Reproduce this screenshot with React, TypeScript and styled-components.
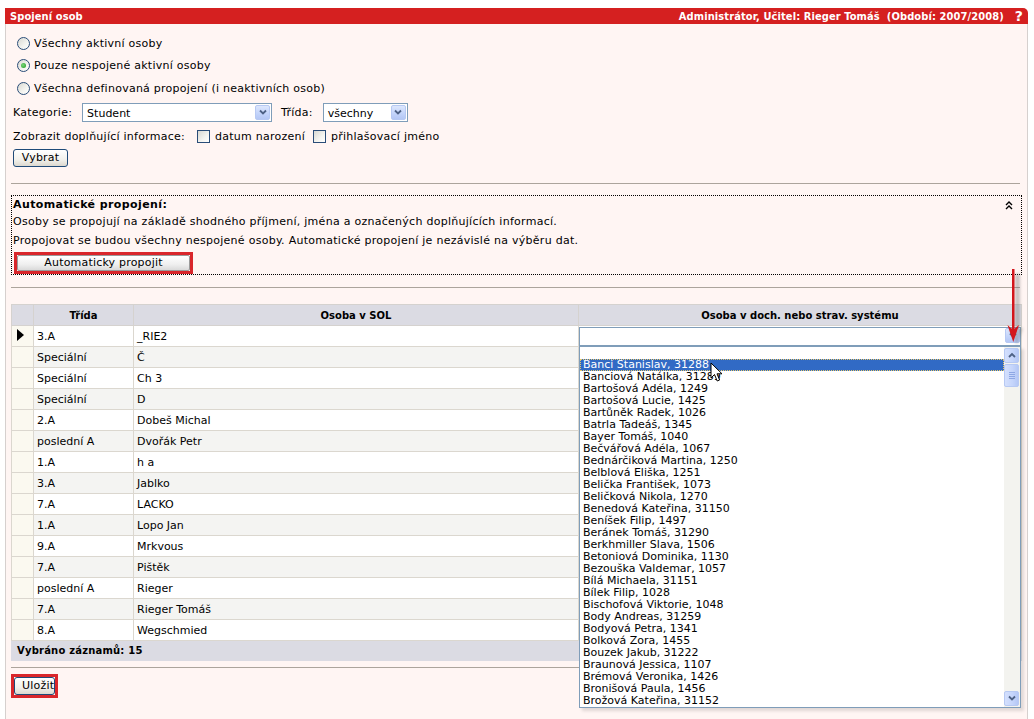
import React from 'react';
import styled, { createGlobalStyle } from 'styled-components';

const GlobalStyle = createGlobalStyle`
  body {
    margin: 0;
    background: #fff;
    font-family: "DejaVu Sans", Verdana, sans-serif;
    font-size: 11px;
    color: #000;
  }
`;

const Page = styled.div`
  position: relative;
  width: 1023px;
  padding: 8px 6px 0 5px;
`;

const TitleBar = styled.div`
  display: flex;
  align-items: center;
  height: 16px;
  padding: 0 5px;
  background: #d52020;
  border-radius: 0 5px 0 0;
  color: #fff;
  font-family: "DejaVu Sans Condensed", "DejaVu Sans", sans-serif;
  font-weight: bold;
  font-size: 11px;
  letter-spacing: 0.1px;
`;

const TitleText = styled.span`
  flex: 1;
`;

const HelpMark = styled.span`
  margin-left: 11px;
  font-family: "DejaVu Sans", sans-serif;
  font-size: 14px;
  line-height: 14px;
`;

const Panel = styled.div`
  min-height: calc(100vh - 24px);
  box-sizing: border-box;
  padding: 8px 5px 0;
  background: #fff5f3;
  border-left: 1px solid #d6d0ce;
  border-right: 1px solid #d6d0ce;
`;

const Form = styled.div`
  padding-left: 2px;
  letter-spacing: 0.25px;
`;

const RadioRow = styled.label<{ $h: number }>`
  display: flex;
  align-items: center;
  gap: 4px;
  height: ${(p) => p.$h}px;
  padding-left: 4px;
`;

const RadioCircle = styled.span<{ $checked?: boolean }>`
  position: relative;
  width: 11px;
  height: 11px;
  border: 1px solid #2a4d78;
  border-radius: 50%;
  background: linear-gradient(135deg, #d8d8d2 0%, #f4f4f0 60%, #fff 100%);
  &::after {
    content: '';
    display: ${(p) => (p.$checked ? 'block' : 'none')};
    position: absolute;
    left: 3px;
    top: 3px;
    width: 5px;
    height: 5px;
    border-radius: 50%;
    background: radial-gradient(circle at 40% 40%, #7bd67b, #1f9a1f);
  }
`;

const FieldRow = styled.div`
  display: flex;
  align-items: center;
  height: 24px;
`;

const FieldLabel = styled.span<{ $gap: number }>`
  margin-right: ${(p) => p.$gap}px;
`;

const Select = styled.div<{ $w: number }>`
  position: relative;
  box-sizing: border-box;
  width: ${(p) => p.$w}px;
  height: 19px;
  border: 1px solid #7f9db9;
  background: #fff;
  padding: 3px 0 0 4px;
  margin-right: 9px;
  letter-spacing: 0;
`;

const ArrowBox = styled.span`
  position: absolute;
  right: 1px;
  top: 1px;
  width: 15px;
  height: 15px;
  box-sizing: border-box;
  border: 1px solid #b7c9f3;
  border-radius: 2px;
  background: linear-gradient(#dde7fd, #c2d3fa 60%, #b4c7f5);
  display: flex;
  align-items: center;
  justify-content: center;
`;

const Chevron = ({ up }: { up?: boolean }) => (
  <svg width="8" height="6" viewBox="0 0 8 6">
    <path
      d={up ? 'M1 5 L4 2 L7 5' : 'M1 1.5 L4 4.5 L7 1.5'}
      fill="none"
      stroke="#4d6185"
      strokeWidth="1.8"
    />
  </svg>
);

const CheckLabel = styled.label<{ $gap: number }>`
  display: flex;
  align-items: center;
  gap: 5px;
  margin-left: ${(p) => p.$gap}px;
`;

const CheckBox = styled.span`
  width: 11px;
  height: 11px;
  border: 1px solid #2a4d78;
  background: linear-gradient(135deg, #d8d8d2 0%, #f4f4f0 60%, #fff 100%);
`;

const XpButton = styled.button<{ $w?: number }>`
  box-sizing: border-box;
  width: ${(p) => (p.$w ? `${p.$w}px` : 'auto')};
  height: 18px;
  padding: 0 7px;
  border: 1px solid #1f4a78;
  border-radius: 3px;
  background: linear-gradient(#ffffff, #f2f1ec 60%, #dcd8cf);
  font-family: "DejaVu Sans", sans-serif;
  font-size: 11px;
  color: #000;
  line-height: 14px;
  letter-spacing: 0.2px;
`;

const FlatButton = styled(XpButton)`
  height: 16px;
  border: 1px solid #9a9a9a;
  border-radius: 2px;
  background: linear-gradient(#ffffff, #efefef 60%, #dadada);
  line-height: 12px;
`;

const RedMark = styled.span`
  display: inline-flex;
  border: 3px solid #d9262b;
`;

const ButtonRow = styled.div`
  height: 22px;
  padding-top: 1px;
`;

const Divider = styled.div<{ $top: number; $bottom: number }>`
  height: 1px;
  margin: ${(p) => p.$top}px 2px ${(p) => p.$bottom}px 0;
  background: #aca49c;
`;

const AutoBox = styled.div`
  position: relative;
  border: 1px dotted #000;
  padding: 0 0 0 1px;
  height: 78px;
  letter-spacing: 0.27px;
`;

const AutoTitle = styled.div`
  height: 17px;
  line-height: 17px;
  font-weight: bold;
  letter-spacing: 0.4px;
`;

const AutoLine = styled.div<{ $h: number }>`
  height: ${(p) => p.$h}px;
  line-height: ${(p) => p.$h}px;
`;

const CollapseIcon = styled.svg`
  position: absolute;
  right: 8px;
  top: 5px;
`;

const AutoButtonRow = styled.div`
  padding: 2px 0 0 1px;
`;

const Table = styled.table`
  width: 100%;
  border-collapse: collapse;
  table-layout: fixed;
`;

const HeadCell = styled.th`
  height: 20px;
  padding: 0;
  background: #dbdbe3;
  border: 1px solid #d5d2cf;
  font-size: 10px;
  font-weight: bold;
  text-align: center;
`;

const Row = styled.tr<{ $alt: boolean }>`
  background: ${(p) => (p.$alt ? '#f4f4f2' : '#fff')};
`;

const Cell = styled.td`
  height: 20px;
  padding: 0 0 0 3px;
  border: 1px solid #dbd7cf;
  white-space: nowrap;
  overflow: visible;
`;

const MarkerCell = styled(Cell)`
  background: #fbf9f0;
  padding: 0 0 0 5px;
`;

const ComboCell = styled.td`
  height: 20px;
  padding: 0;
  border: 1px solid #dbd7cf;
`;

const FooterCell = styled.td`
  height: 19px;
  padding: 0 0 0 5px;
  background: #dbdbe3;
  font-weight: bold;
  font-size: 10px;
  letter-spacing: 0.2px;
  border: 1px solid #dbdbe3;
`;

const Combo = styled.div`
  position: relative;
  height: 19px;
`;

const ComboBox = styled.div`
  box-sizing: border-box;
  height: 19px;
  border: 1px solid #7f9db9;
  background: #fff;
`;

const DropList = styled.div`
  position: absolute;
  z-index: 2;
  left: 0;
  top: 19px;
  width: 100%;
  box-sizing: border-box;
  height: 362px;
  border: 1px solid #7f9db9;
  background: #fff;
  display: flex;
  box-shadow: 3px 3px 3px rgba(0, 0, 0, 0.12);
`;

const Items = styled.div`
  flex: 1;
  overflow: hidden;
`;

const Item = styled.div<{ $selected?: boolean }>`
  box-sizing: border-box;
  height: 12px;
  line-height: 12px;
  padding-left: 3px;
  white-space: nowrap;
  color: ${(p) => (p.$selected ? '#fff' : '#000')};
  background: ${(p) => (p.$selected ? '#316ac5' : 'transparent')};
  outline: ${(p) => (p.$selected ? '1px dotted #e8c86a' : 'none')};
  outline-offset: -1px;
`;

const ScrollBar = styled.div`
  width: 16px;
  display: flex;
  flex-direction: column;
  background: #f3f3ef;
  padding: 1px 0;
`;

const ScrollBtn = styled.div`
  box-sizing: border-box;
  width: 15px;
  height: 15px;
  border: 1px solid #b7c9f3;
  border-radius: 2px;
  background: linear-gradient(90deg, #d4e0fd, #c4d4fb 60%, #b4c7f5);
  display: flex;
  align-items: center;
  justify-content: center;
`;

const Thumb = styled(ScrollBtn)`
  height: 23px;
  margin-top: 1px;
  flex-direction: column;
  gap: 1px;
`;

const Grip = styled.span`
  width: 6px;
  height: 1px;
  background: #8ea7e4;
`;

const Track = styled.div`
  flex: 1;
`;

const Overlay = styled.svg<{ $x: number; $y: number }>`
  position: absolute;
  z-index: 5;
  left: ${(p) => p.$x}px;
  top: ${(p) => p.$y}px;
`;

const rows: [string, string][] = [
  ['3.A', '_RIE2'],
  ['Speciální', 'Č'],
  ['Speciální', 'Ch 3'],
  ['Speciální', 'D'],
  ['2.A', 'Dobeš Michal'],
  ['poslední A', 'Dvořák Petr'],
  ['1.A', 'h a'],
  ['3.A', 'Jablko'],
  ['7.A', 'LACKO'],
  ['1.A', 'Lopo Jan'],
  ['9.A', 'Mrkvous'],
  ['7.A', 'Pištěk'],
  ['poslední A', 'Rieger'],
  ['7.A', 'Rieger Tomáš'],
  ['8.A', 'Wegschmied'],
];

const people = [
  'Banci Stanislav, 31288',
  'Banciová Natálka, 31289',
  'Bartošová Adéla, 1249',
  'Bartošová Lucie, 1425',
  'Bartůněk Radek, 1026',
  'Batrla Tadeáš, 1345',
  'Bayer Tomáš, 1040',
  'Bečvářová Adéla, 1067',
  'Bednárčiková Martina, 1250',
  'Belblová Eliška, 1251',
  'Belička František, 1073',
  'Beličková Nikola, 1270',
  'Benedová Kateřina, 31150',
  'Beníšek Filip, 1497',
  'Beránek Tomáš, 31290',
  'Berkhmiller Slava, 1506',
  'Betoniová Dominika, 1130',
  'Bezouška Valdemar, 1057',
  'Bílá Michaela, 31151',
  'Bílek Filip, 1028',
  'Bischofová Viktorie, 1048',
  'Body Andreas, 31259',
  'Bodyová Petra, 1341',
  'Bolková Zora, 1455',
  'Bouzek Jakub, 31222',
  'Braunová Jessica, 1107',
  'Brémová Veronika, 1426',
  'Bronišová Paula, 1456',
  'Brožová Kateřina, 31152',
];

export default function App() {
  return (
    <Page>
      <GlobalStyle />
      <TitleBar>
        <TitleText>Spojení osob</TitleText>
        <span>Administrátor, Učitel: Rieger Tomáš&nbsp; (Období: 2007/2008)</span>
        <HelpMark>?</HelpMark>
      </TitleBar>
      <Panel>
        <Form>
          <RadioRow $h={22}>
            <RadioCircle />
            Všechny aktivní osoby
          </RadioRow>
          <RadioRow $h={23}>
            <RadioCircle $checked />
            Pouze nespojené aktivní osoby
          </RadioRow>
          <RadioRow $h={23}>
            <RadioCircle />
            Všechna definovaná propojení (i neaktivních osob)
          </RadioRow>
          <FieldRow>
            <FieldLabel $gap={10}>Kategorie:</FieldLabel>
            <Select $w={190}>
              Student
              <ArrowBox>
                <Chevron />
              </ArrowBox>
            </Select>
            <FieldLabel $gap={10}>Třída:</FieldLabel>
            <Select $w={85}>
              všechny
              <ArrowBox>
                <Chevron />
              </ArrowBox>
            </Select>
          </FieldRow>
          <FieldRow>
            <span>Zobrazit doplňující informace:</span>
            <CheckLabel $gap={12}>
              <CheckBox />
              datum narození
            </CheckLabel>
            <CheckLabel $gap={8}>
              <CheckBox />
              přihlašovací jméno
            </CheckLabel>
          </FieldRow>
          <ButtonRow>
            <XpButton $w={55}>Vybrat</XpButton>
          </ButtonRow>
        </Form>
        <Divider $top={12} $bottom={11} />
        <AutoBox>
          <AutoTitle>Automatické propojení:</AutoTitle>
          <AutoLine $h={18}>
            Osoby se propojují na základě shodného příjmení, jména a označených doplňujících informací.
          </AutoLine>
          <AutoLine $h={19}>
            Propojovat se budou všechny nespojené osoby. Automatické propojení je nezávislé na výběru dat.
          </AutoLine>
          <AutoButtonRow>
            <RedMark>
              <FlatButton $w={173}>Automaticky propojit</FlatButton>
            </RedMark>
          </AutoButtonRow>
          <CollapseIcon width="8" height="9" viewBox="0 0 8 9">
            <path d="M1 4 L4 1 L7 4 M1 8 L4 5 L7 8" fill="none" stroke="#000" strokeWidth="1.4" />
          </CollapseIcon>
        </AutoBox>
        <Divider $top={12} $bottom={16} />
        <Table>
          <colgroup>
            <col style={{ width: 22 }} />
            <col style={{ width: 100 }} />
            <col style={{ width: 445 }} />
            <col />
          </colgroup>
          <thead>
            <tr>
              <HeadCell />
              <HeadCell>Třída</HeadCell>
              <HeadCell>Osoba v SOL</HeadCell>
              <HeadCell>Osoba v doch. nebo strav. systému</HeadCell>
            </tr>
          </thead>
          <tbody>
            {rows.map(([cls, name], i) => (
              <Row key={i} $alt={i % 2 === 1}>
                <MarkerCell>
                  {i === 0 && (
                    <svg width="7" height="12" viewBox="0 0 7 12">
                      <path d="M0 0 L7 6 L0 12 Z" fill="#000" />
                    </svg>
                  )}
                </MarkerCell>
                <Cell>{cls}</Cell>
                <Cell>{name}</Cell>
                {i === 0 ? (
                  <ComboCell>
                    <Combo>
                      <ComboBox>
                        <ArrowBox>
                          <Chevron />
                        </ArrowBox>
                      </ComboBox>
                      <DropList>
                        <Items>
                          <Item />
                          {people.map((p, j) => (
                            <Item key={p} $selected={j === 0}>
                              {p}
                            </Item>
                          ))}
                        </Items>
                        <ScrollBar>
                          <ScrollBtn>
                            <Chevron up />
                          </ScrollBtn>
                          <Thumb>
                            <Grip />
                            <Grip />
                            <Grip />
                            <Grip />
                          </Thumb>
                          <Track />
                          <ScrollBtn>
                            <Chevron />
                          </ScrollBtn>
                        </ScrollBar>
                      </DropList>
                    </Combo>
                  </ComboCell>
                ) : (
                  <Cell />
                )}
              </Row>
            ))}
            <tr>
              <FooterCell colSpan={4}>Vybráno záznamů: 15</FooterCell>
            </tr>
          </tbody>
        </Table>
        <Divider $top={6} $bottom={6} />
        <RedMark>
          <XpButton $w={41}>Uložit</XpButton>
        </RedMark>
      </Panel>

      <Overlay $x={1004} $y={266} width="22" height="82" viewBox="0 0 22 82">
        <defs>
          <filter id="blur">
            <feGaussianBlur stdDeviation="1.6" />
          </filter>
        </defs>
        <g filter="url(#blur)" opacity="0.35" fill="#666">
          <rect x="11" y="8" width="5" height="62" />
          <path d="M5 62 L19 62 L13 79 Z" />
        </g>
        <rect x="8" y="3" width="2.5" height="62" fill="#d3161c" />
        <path d="M3.5 59 L9.25 64 L15 59 L9.25 76 Z" fill="#d3161c" />
      </Overlay>

      <Overlay $x={710} $y={362} width="14" height="21" viewBox="0 0 14 21">
        <path
          d="M1 1 L1 16 L4.5 12.5 L7.2 19 L9.6 18 L7 11.8 L12 11.8 Z"
          fill="#fff"
          stroke="#000"
          strokeWidth="1"
          strokeLinejoin="miter"
        />
      </Overlay>
    </Page>
  );
}
